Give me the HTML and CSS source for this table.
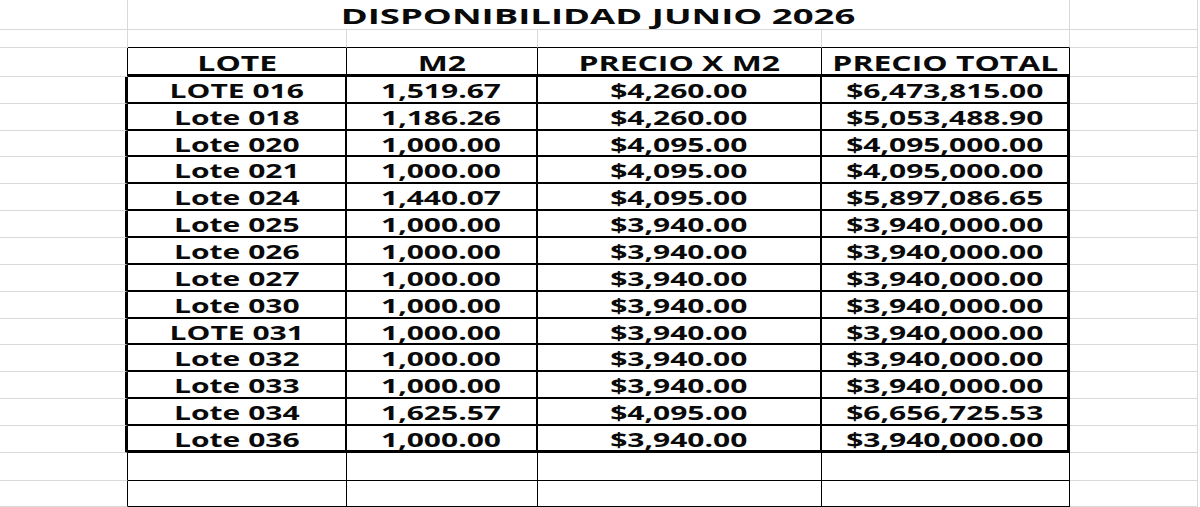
FILE: index.html
```html
<!DOCTYPE html>
<html lang="es">
<head>
<meta charset="utf-8">
<title>Disponibilidad Junio 2026</title>
<link rel="stylesheet" href="styles.css">
</head>
<body>
<div class="sheet">
  <div class="c"></div><div class="c title"><span class="t">DISPONIBILIDAD JUNIO 2026</span></div><div class="c"></div>

  <div class="c"></div><div class="c top"></div><div class="c top"></div><div class="c top"></div><div class="c top"></div><div class="c"></div>

  <div class="c edge-h"></div><div class="c hd"><span class="t">LOTE</span></div><div class="c hd"><span class="t">M2</span></div><div class="c hd"><span class="t">PRECIO X M2</span></div><div class="c hd"><span class="t">PRECIO TOTAL</span></div><div class="c"></div>

  <div class="c edge-d"></div><div class="c dt"><span class="t">LOTE 016</span></div><div class="c dt"><span class="t">1,519.67</span></div><div class="c dt"><span class="t">$4,260.00</span></div><div class="c dt lc"><span class="t">$6,473,815.00</span></div><div class="c"></div>
  <div class="c edge-d"></div><div class="c dt"><span class="t">Lote 018</span></div><div class="c dt"><span class="t">1,186.26</span></div><div class="c dt"><span class="t">$4,260.00</span></div><div class="c dt lc"><span class="t">$5,053,488.90</span></div><div class="c"></div>
  <div class="c edge-d"></div><div class="c dt"><span class="t">Lote 020</span></div><div class="c dt"><span class="t">1,000.00</span></div><div class="c dt"><span class="t">$4,095.00</span></div><div class="c dt lc"><span class="t">$4,095,000.00</span></div><div class="c"></div>
  <div class="c edge-d"></div><div class="c dt"><span class="t">Lote 021</span></div><div class="c dt"><span class="t">1,000.00</span></div><div class="c dt"><span class="t">$4,095.00</span></div><div class="c dt lc"><span class="t">$4,095,000.00</span></div><div class="c"></div>
  <div class="c edge-d"></div><div class="c dt"><span class="t">Lote 024</span></div><div class="c dt"><span class="t">1,440.07</span></div><div class="c dt"><span class="t">$4,095.00</span></div><div class="c dt lc"><span class="t">$5,897,086.65</span></div><div class="c"></div>
  <div class="c edge-d"></div><div class="c dt"><span class="t">Lote 025</span></div><div class="c dt"><span class="t">1,000.00</span></div><div class="c dt"><span class="t">$3,940.00</span></div><div class="c dt lc"><span class="t">$3,940,000.00</span></div><div class="c"></div>
  <div class="c edge-d"></div><div class="c dt"><span class="t">Lote 026</span></div><div class="c dt"><span class="t">1,000.00</span></div><div class="c dt"><span class="t">$3,940.00</span></div><div class="c dt lc"><span class="t">$3,940,000.00</span></div><div class="c"></div>
  <div class="c edge-d"></div><div class="c dt"><span class="t">Lote 027</span></div><div class="c dt"><span class="t">1,000.00</span></div><div class="c dt"><span class="t">$3,940.00</span></div><div class="c dt lc"><span class="t">$3,940,000.00</span></div><div class="c"></div>
  <div class="c edge-d"></div><div class="c dt"><span class="t">Lote 030</span></div><div class="c dt"><span class="t">1,000.00</span></div><div class="c dt"><span class="t">$3,940.00</span></div><div class="c dt lc"><span class="t">$3,940,000.00</span></div><div class="c"></div>
  <div class="c edge-d"></div><div class="c dt"><span class="t">LOTE 031</span></div><div class="c dt"><span class="t">1,000.00</span></div><div class="c dt"><span class="t">$3,940.00</span></div><div class="c dt lc"><span class="t">$3,940,000.00</span></div><div class="c"></div>
  <div class="c edge-d"></div><div class="c dt"><span class="t">Lote 032</span></div><div class="c dt"><span class="t">1,000.00</span></div><div class="c dt"><span class="t">$3,940.00</span></div><div class="c dt lc"><span class="t">$3,940,000.00</span></div><div class="c"></div>
  <div class="c edge-d"></div><div class="c dt"><span class="t">Lote 033</span></div><div class="c dt"><span class="t">1,000.00</span></div><div class="c dt"><span class="t">$3,940.00</span></div><div class="c dt lc"><span class="t">$3,940,000.00</span></div><div class="c"></div>
  <div class="c edge-d"></div><div class="c dt"><span class="t">Lote 034</span></div><div class="c dt"><span class="t">1,625.57</span></div><div class="c dt"><span class="t">$4,095.00</span></div><div class="c dt lc"><span class="t">$6,656,725.53</span></div><div class="c"></div>
  <div class="c edge-d"></div><div class="c dt lr"><span class="t">Lote 036</span></div><div class="c dt lr"><span class="t">1,000.00</span></div><div class="c dt lr"><span class="t">$3,940.00</span></div><div class="c dt lr lc"><span class="t">$3,940,000.00</span></div><div class="c"></div>

  <div class="c edge-b"></div><div class="c bl"></div><div class="c bl"></div><div class="c bl"></div><div class="c bl"></div><div class="c"></div>
  <div class="c edge-b"></div><div class="c bl"></div><div class="c bl"></div><div class="c bl"></div><div class="c bl"></div><div class="c"></div>
</div>
</body>
</html>
```
FILE: styles.css
```css
html, body {
  margin: 0;
  padding: 0;
  background: #ffffff;
}

body {
  font-family: "Open Sans", "Liberation Sans", sans-serif;
  color: #0a0a0a;
}

.sheet {
  display: grid;
  grid-template-columns: 128px 219px 191px 284px 248px 128px;
  grid-template-rows: 30px 18px 29px 27px 27px 26px 27px 27px 27px 27px 27px 27px 26px 27px 27px 27px 27px 28px 26px;
  width: 1200px;
  height: 507px;
  overflow: hidden;
}

.c {
  box-sizing: border-box;
  border-right: 1px solid #d9d9d9;
  border-bottom: 1px solid #d9d9d9;
  display: flex;
  align-items: center;
  justify-content: center;
  font-weight: 700;
  white-space: nowrap;
  overflow: visible;
}

.t {
  display: inline-block;
  transform: scaleX(1.5);
}

.title {
  grid-column: 2 / 6;
  font-size: 22px;
}

.title .t {
  transform: scaleX(1.66);
}

.top {
  border-bottom-color: #000;
}

.hd {
  font-size: 21px;
  border-right: 1px solid #000;
  border-bottom: 3px solid #000;
  padding-top: 4px;
}

.hd .t {
  transform: scaleX(1.52);
}

.edge-h {
  border-right: 1px solid #000;
}

.edge-d {
  border-right: 3px solid #000;
}

.edge-b {
  border-right: 1px solid #000;
}

.dt {
  font-size: 20px;
  border-right: 2px solid #000;
  border-bottom: 2px solid #000;
  padding-top: 2px;
}

.dt.lc {
  border-right-width: 3px;
}

.dt.lr {
  border-bottom-width: 3px;
}

.bl {
  border-right: 1px solid #000;
  border-bottom: 1px solid #000;
}
```
